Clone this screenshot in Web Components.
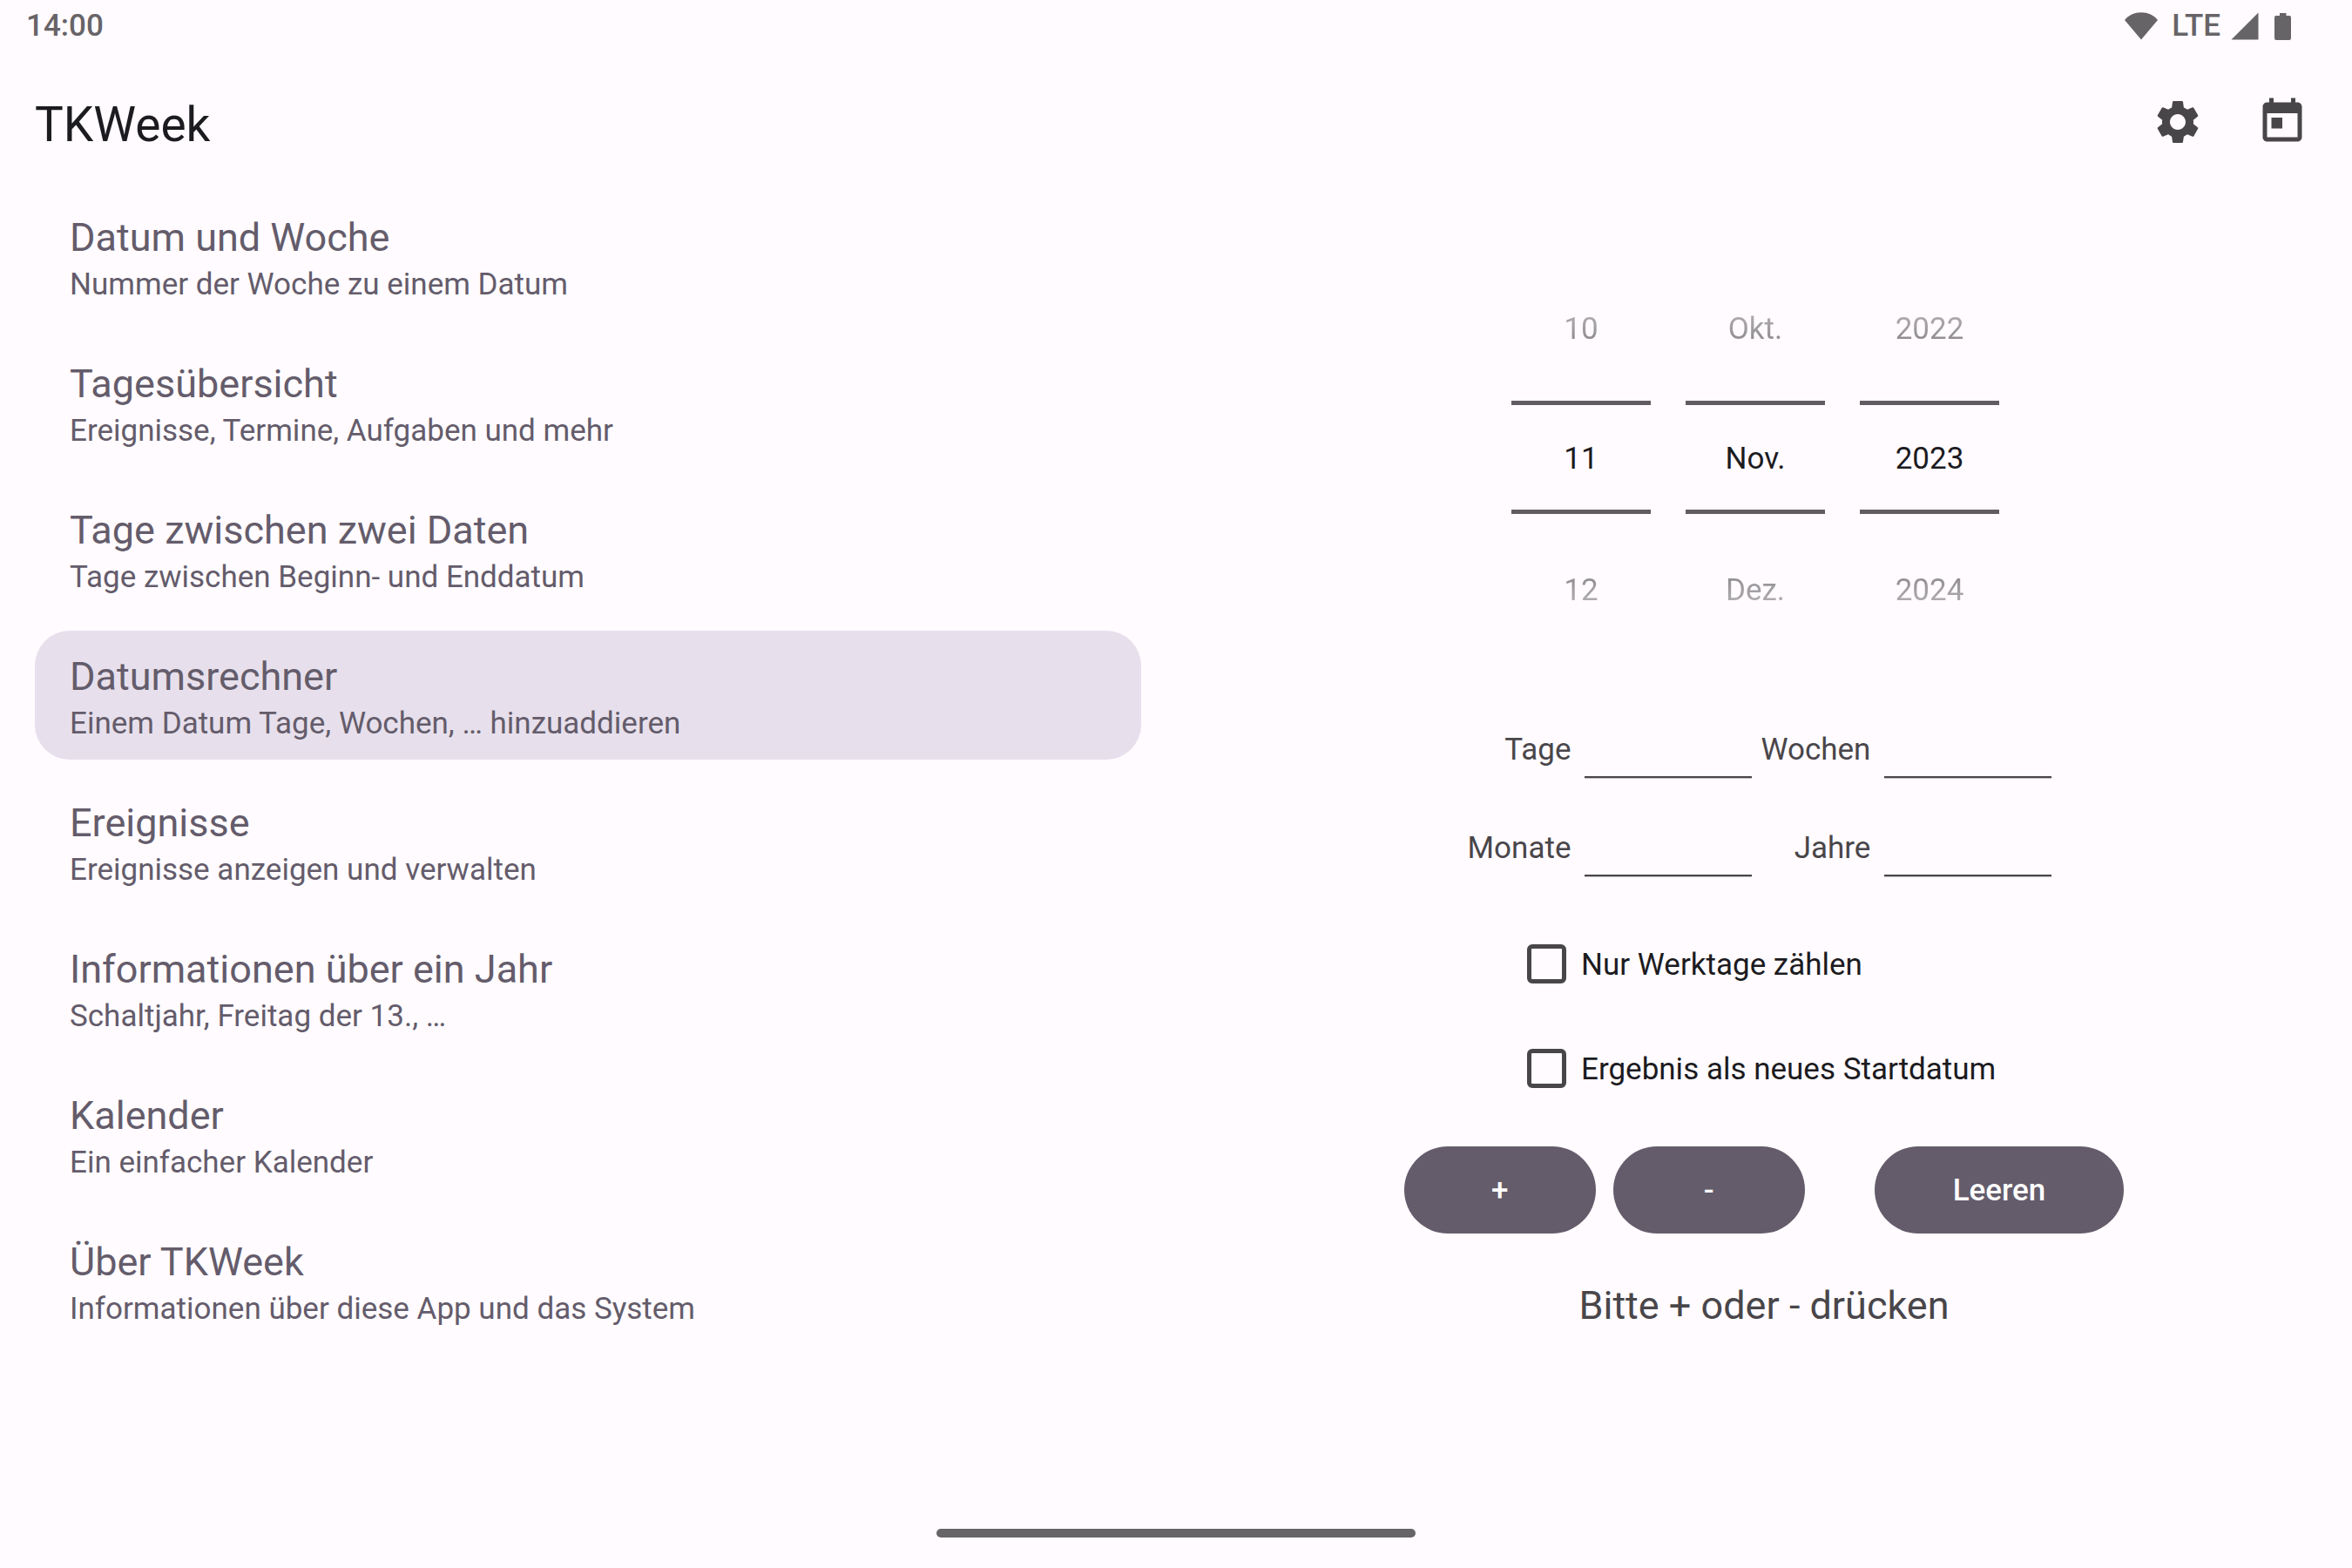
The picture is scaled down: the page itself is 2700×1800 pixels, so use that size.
<!DOCTYPE html>
<html lang="de">
<head>
<meta charset="utf-8">
<title>TKWeek</title>
<style>
html{background:#fffbff}
body{margin:0;font-family:Roboto,"Noto Sans",sans-serif;font-size:35px;color:#1c1b1f;
--ink:#1c1b1f;--muted:#49464a;--secondary:#645c6b;--chip:#e7e0ec;--system:#676468}
</style>
</head>
<body>
<tk-app></tk-app>
<script>
class Base extends HTMLElement{
  constructor(){super();this.attachShadow({mode:'open'});}
  connectedCallback(){
    this.shadowRoot.innerHTML='<style>*{box-sizing:border-box}button,input{font:inherit;color:inherit;border:0;background:none;margin:0;padding:0}'+this.css()+'</style>'+this.html();
  }
  attr(n){return this.getAttribute(n)||'';}
}

customElements.define('status-bar',class extends Base{
  css(){return `:host{display:flex;justify-content:space-between;align-items:center;height:60px;padding:0 70px 0 30px;color:var(--system)}
    span,time{line-height:58px;font-weight:500}
    .icons{display:flex;align-items:center;gap:12px}
    svg{display:block;fill:currentColor}.wifi{margin-right:4px}.batt{margin-left:6px}`;}
  html(){return `<time>14:00</time><div class="icons">
    <svg class="wifi" width="38" height="32" viewBox="0 0 38 32"><path d="M19 31.500L0 9C4.500 3.500 11.500 0.200 19 0.200S33.500 3.500 38 9Z"/></svg>
    <span>LTE</span>
    <svg width="32" height="32" viewBox="0 0 32 32"><path d="M0.500 31.500L31.500 0.500V31.500Z"/></svg>
    <svg class="batt" width="19" height="32" viewBox="0 0 19 32"><path d="M6 1H13.500V4H17Q19 4 19 6V30Q19 32 17 32H2Q0 32 0 30V6Q0 4 2 4H6Z"/></svg></div>`;}
});

customElements.define('icon-button',class extends Base{
  css(){return `:host{display:block}button{display:flex;align-items:center;justify-content:center;width:120px;height:120px;border-radius:60px;color:var(--muted);cursor:pointer}
    svg{width:60px;height:60px;fill:currentColor}`;}
  html(){
    const p={
      settings:'M19.14,12.94c0.04-0.3,0.06-0.61,0.06-0.94c0-0.32-0.02-0.64-0.07-0.94l2.03-1.58c0.18-0.14,0.23-0.41,0.12-0.61l-1.92-3.32c-0.12-0.22-0.37-0.29-0.59-0.22l-2.39,0.96c-0.5-0.38-1.03-0.7-1.62-0.94L14.4,2.81c-0.04-0.24-0.24-0.41-0.48-0.41h-3.84c-0.24,0-0.43,0.17-0.47,0.41L9.25,5.35C8.66,5.59,8.12,5.92,7.63,6.29L5.24,5.33c-0.22-0.08-0.47,0-0.59,0.22L2.74,8.87C2.62,9.08,2.66,9.34,2.86,9.48l2.03,1.58C4.84,11.36,4.8,11.69,4.8,12s0.02,0.64,0.07,0.94l-2.03,1.58c-0.18,0.14-0.23,0.41-0.12,0.61l1.92,3.32c0.12,0.22,0.37,0.29,0.59,0.22l2.39-0.96c0.5,0.38,1.03,0.7,1.62,0.94l0.36,2.54c0.05,0.24,0.24,0.41,0.48,0.41h3.84c0.24,0,0.44-0.17,0.47-0.41l0.36-2.54c0.59-0.24,1.13-0.56,1.62-0.94l2.39,0.96c0.22,0.08,0.47,0,0.59-0.22l1.92-3.32c0.12-0.22,0.07-0.47-0.12-0.61L19.14,12.94zM12,15.6c-1.98,0-3.6-1.62-3.6-3.6s1.62-3.6,3.6-3.6s3.6,1.62,3.6,3.6S13.98,15.6,12,15.6z',
      today:'M19 3h-1V1h-2v2H8V1H6v2H5c-1.11 0-1.99.9-1.99 2L3 19c0 1.1.89 2 2 2h14c1.1 0 2-.9 2-2V5c0-1.1-.9-2-2-2zm0 16H5V8h14v11zM7 10h5v5H7z'};
    return `<button type="button" aria-label="${this.attr('label')}"><svg viewBox="0 0 24 24"><path d="${p[this.attr('icon')]}"/></svg></button>`;}
});

customElements.define('app-bar',class extends Base{
  css(){return `:host{display:flex;align-items:center;justify-content:space-between;height:160px;padding:0 20px 0 40px}
    h1{margin:0;padding-top:6px;font-size:55px;line-height:70px;font-weight:400;color:var(--ink)}
    div{display:flex}`;}
  html(){return `<h1><slot></slot></h1><div><slot name="actions"></slot></div>`;}
});

customElements.define('menu-item',class extends Base{
  css(){return `:host{display:block}
    a{display:block;padding:23px 40px 17px;border-radius:40px;color:var(--secondary);text-decoration:none}
    a[aria-current]{background:var(--chip)}
    .t{display:block;font-size:45px;line-height:60px}
    .s{display:block;font-size:35px;line-height:48px}`;}
  html(){return `<a href="#"${this.hasAttribute('selected')?' aria-current="page"':''}><span class="t"><slot></slot></span><span class="s"><slot name="summary"></slot></span></a>`;}
});

customElements.define('number-picker',class extends Base{
  css(){return `:host{display:flex;flex-direction:column;width:160px;text-align:center}
    button{color:var(--ink);opacity:.5;cursor:pointer;padding-top:2px}
    .prev{height:168px;-webkit-mask-image:linear-gradient(to top,#000 40%,transparent)}
    .next{height:172px;-webkit-mask-image:linear-gradient(to bottom,#000 40%,transparent)}
    input{width:100%;height:130px;border:solid #605d62;border-width:5px 0;color:var(--ink);text-align:center;padding-top:2px}`;}
  html(){return `<button type="button" class="prev">${this.attr('prev')}</button><input type="text" aria-label="${this.attr('label')}" value="${this.attr('value')}"><button type="button" class="next">${this.attr('next')}</button>`;}
});

customElements.define('date-picker',class extends Base{
  css(){return `:host{display:flex;gap:40px;padding-right:20px}`;}
  html(){return `<number-picker label="Tag" prev="10" value="11" next="12"></number-picker>
    <number-picker label="Monat" prev="Okt." value="Nov." next="Dez."></number-picker>
    <number-picker label="Jahr" prev="2022" value="2023" next="2024"></number-picker>`;}
});

customElements.define('offset-fields',class extends Base{
  css(){return `:host{display:grid;grid-template-columns:auto 212px auto 212px;grid-auto-rows:113px;align-items:start;color:var(--muted)}
    label{text-align:right;line-height:90px;padding-right:6px}
    input{height:77px;margin:0 10px;width:192px;border-bottom:2px solid var(--muted);box-shadow:0 1px #c4c1c5}`;}
  html(){return ['Tage','Wochen','Monate','Jahre'].map(n=>`<label for="${n}">${n}</label><input id="${n}" type="text" inputmode="numeric">`).join('');}
});

customElements.define('check-row',class extends Base{
  css(){return `:host{display:block}label{display:flex;align-items:center;height:120px;gap:17px;padding-left:14px;color:var(--ink);white-space:nowrap}
    span{padding-top:2px}
    input{appearance:none;width:45px;height:45px;border:5px solid var(--muted);border-radius:6px}
    input:checked{background:var(--muted)}`;}
  html(){return `<label><input type="checkbox"><span><slot></slot></span></label>`;}
});

customElements.define('pill-button',class extends Base{
  css(){return `:host{display:block}button{height:100px;min-width:220px;padding:0 90px;border-radius:50px;background:var(--secondary);color:#fff;font-weight:500;cursor:pointer}`;}
  html(){return `<button type="button"><slot></slot></button>`;}
});

customElements.define('date-calculator',class extends Base{
  css(){return `:host{display:flex;flex-direction:column;align-items:center;padding-top:72px}
    offset-fields{margin-top:54px}
    .checks{margin-top:4px;min-width:572px}
    .buttons{display:flex;gap:20px;margin-top:30px}
    .clear{margin-left:60px}
    output{margin-top:53px;font-size:45px;line-height:60px;color:var(--muted)}`;}
  html(){return `<date-picker></date-picker><offset-fields></offset-fields>
    <div class="checks"><check-row>Nur Werktage zählen</check-row><check-row>Ergebnis als neues Startdatum</check-row></div>
    <div class="buttons"><pill-button>+</pill-button><pill-button>-</pill-button><pill-button class="clear">Leeren</pill-button></div>
    <output>Bitte + oder - drücken</output>`;}
});

customElements.define('gesture-bar',class extends Base{
  css(){return `:host{display:flex;justify-content:center;padding-bottom:35px}
    div{width:550px;height:10px;border-radius:5px;background:var(--system)}`;}
  html(){return `<div></div>`;}
});

customElements.define('tk-app',class extends Base{
  css(){return `:host{display:flex;flex-direction:column;min-height:100vh;background:#fffbff}
    main{flex:1;display:grid;grid-template-columns:1fr 1fr;align-items:start}
    nav{display:flex;flex-direction:column;gap:20px;padding:0 40px}`;}
  html(){
    const items=[['Datum und Woche','Nummer der Woche zu einem Datum'],['Tagesübersicht','Ereignisse, Termine, Aufgaben und mehr'],['Tage zwischen zwei Daten','Tage zwischen Beginn- und Enddatum'],['Datumsrechner','Einem Datum Tage, Wochen, … hinzuaddieren'],['Ereignisse','Ereignisse anzeigen und verwalten'],['Informationen über ein Jahr','Schaltjahr, Freitag der 13., …'],['Kalender','Ein einfacher Kalender'],['Über TKWeek','Informationen über diese App und das System']];
    return `<status-bar></status-bar>
    <app-bar>TKWeek<icon-button slot="actions" icon="settings" label="Einstellungen"></icon-button><icon-button slot="actions" icon="today" label="Heute"></icon-button></app-bar>
    <main><nav>${items.map(([t,s],i)=>`<menu-item${i===3?' selected':''}>${t}<span slot="summary">${s}</span></menu-item>`).join('')}</nav>
    <date-calculator></date-calculator></main><gesture-bar></gesture-bar>`;}
});
</script>
</body>
</html>
